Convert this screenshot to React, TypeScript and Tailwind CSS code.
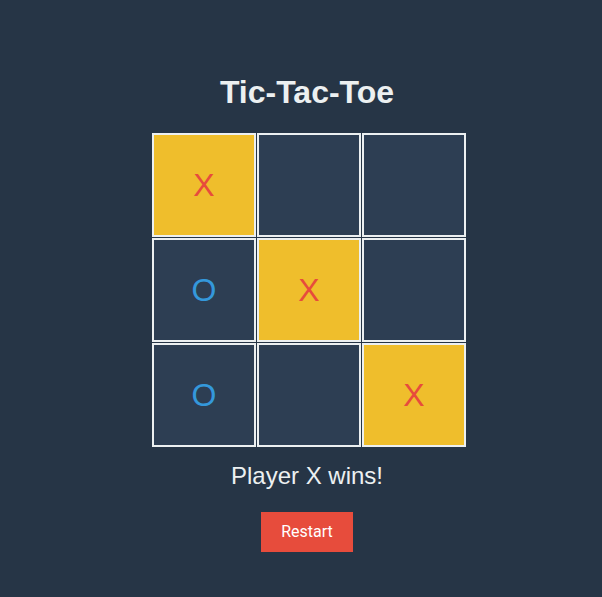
const board = ["X", "", "", "O", "X", "", "O", "", "X"];
const winLine = [0, 4, 8];

export default function App() {
  return (
    <div className="min-h-[597px] bg-[#263546] pl-[12px] pt-[76px] flex flex-col items-center font-['Liberation_Sans',Arial,sans-serif]">
      <h1 className="text-[32px] leading-[32px] font-bold text-[#ecf0f1]">Tic-Tac-Toe</h1>

      <div className="mt-[25px] ml-[4px] grid grid-cols-[repeat(3,104px)] gap-px">
        {board.map((v, i) => (
          <div
            key={i}
            className={`flex h-[104px] w-[104px] items-center justify-center border-2 border-[#ecf0f1] text-[32px] leading-none ${
              winLine.includes(i) ? "bg-[#efbe2c]" : "bg-[#2d3e53]"
            } ${v === "X" ? "text-[#e74c3c]" : "text-[#3498db]"}`}
          >
            {v}
          </div>
        ))}
      </div>

      <p className="mt-[17px] text-[24px] leading-[24px] text-[#ecf0f1]">Player X wins!</p>

      <button className="mt-[24px] flex h-10 w-[92px] items-center justify-center bg-[#e74c3c] font-['Roboto',sans-serif] text-base text-white">
        Restart
      </button>
    </div>
  );
}
